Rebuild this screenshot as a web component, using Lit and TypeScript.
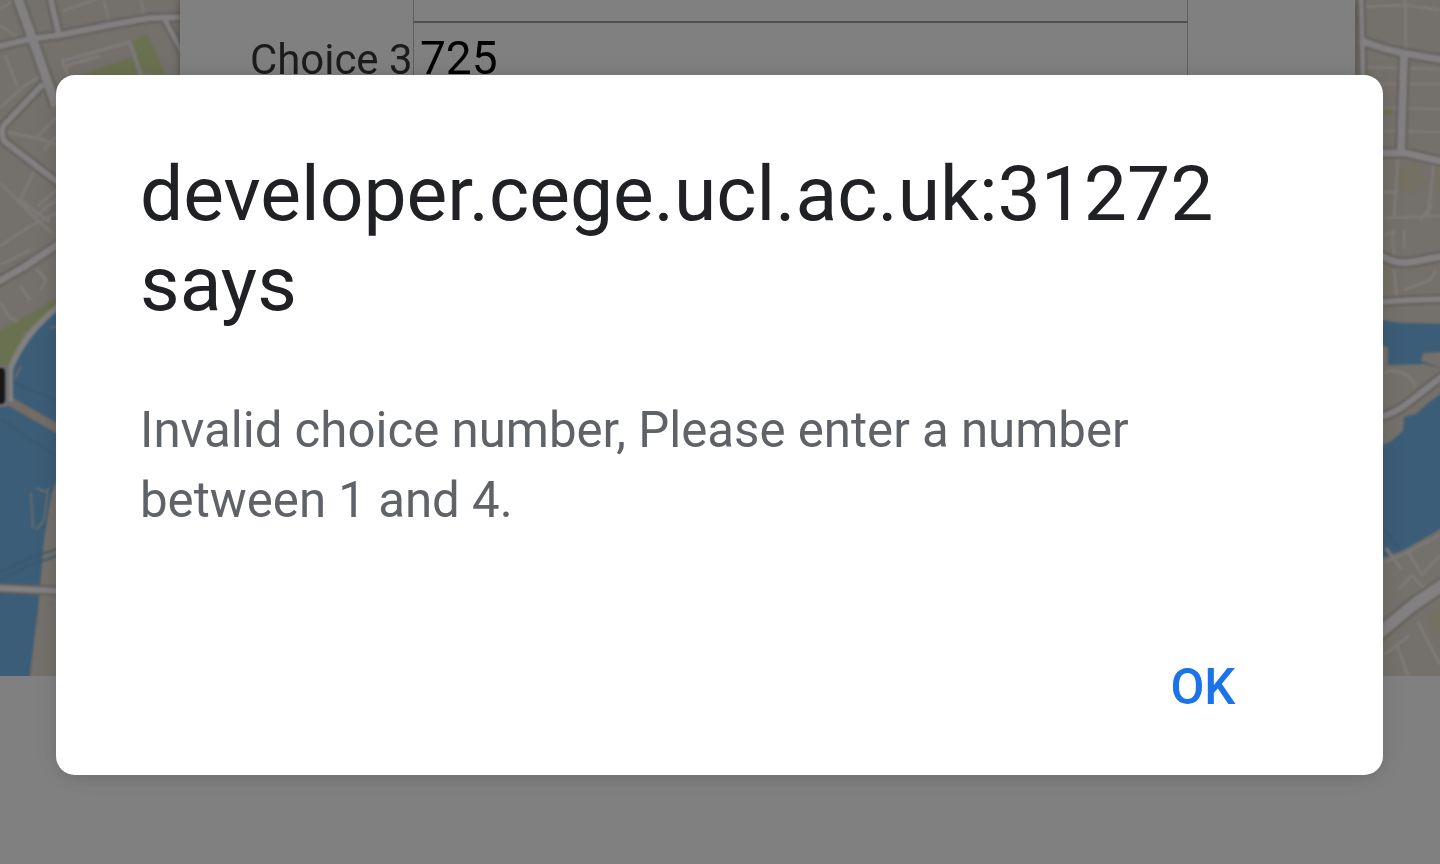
import { LitElement, html, css, svg } from "lit";
import { customElement } from "lit/decorators.js";

type Road = [path: string, width: number];

const MAJOR: Road[] = [
  ["M17 -4L33 40L56 106", 9.5],
  ["M-4 47L30 39L60 35L110 25L150 18L190 17", 6],
  ["M50 -4L59 35", 6],
  ["M43 84L4 125Q0 131 4 141L60 184", 6],
  ["M165 20L182 52", 5],
  ["M-4 283L24 267L60 243", 7],
  ["M1361 -4L1363 80", 5],
  ["M1360 40Q1382 49 1403 53T1444 60", 7],
  ["M1404 56L1401 150", 8],
  ["M1380 153L1405 153L1444 162", 7],
  ["M1380 255Q1396 265 1412 262T1444 256", 7],
  ["M1380 302L1412 300L1444 299", 6],
  ["M1380 417Q1394 414 1408 403T1444 375", 6.5],
  ["M1376 636L1412 606L1444 584", 12],
];

const MINOR: Road[] = [
  ["M-2 10L18 -2M0 25L18 38M33 30L22 0", 2.5],
  ["M62 11L100 -2M104 0L109 22M141 0L144 18", 2.5],
  ["M62 61L130 42L142 78M66 66L100 56M62 61L68 75", 3.5],
  ["M5 55L17 86M0 108L24 86L40 76M7 132L36 138L56 144M36 138L56 118M44 150L56 136", 3],
  ["M34 172L20 200L50 222M0 183L34 217L52 233M34 217L56 200M0 246L30 226L56 213M56 190L38 206", 3],
  ["M0 302L10 318L18 322M20 285L30 300M36 268L46 280L40 290M0 265L30 250", 3],
  ["M1405 -2L1406 54M1360 7L1405 5L1440 10", 3],
  ["M1364 67L1440 69M1364 84L1440 84M1384 108L1440 109M1384 131L1440 132", 2.5],
  ["M1398 158L1394 218M1434 160L1428 218M1384 192L1398 192M1384 235L1396 232M1420 220L1432 205", 3],
  ["M1392 230L1394 255M1404 230L1404 248M1384 218L1440 216M1394 270L1397 297M1404 290L1430 280L1436 270", 3],
  ["M1384 372Q1410 368 1415 388", 3],
  ["M1384 563L1408 552L1440 535M1408 552L1422 575L1440 555M1398 590L1412 575L1428 593", 3],
  ["M1397 645L1408 676M1418 622L1440 665M1384 655L1410 635M1386 548L1402 570", 3],
];

@customElement("map-view")
class MapView extends LitElement {
  static styles = css`
    :host { display: block; }
    svg { display: block; width: 100%; height: 100%; }
    .land { fill: #74706b; }
    .park { fill: #6a7150; }
    .water { fill: #3c5d77; }
    .edge { stroke: #62605d; fill: none; }
    .road { stroke: #828081; fill: none; stroke-linejoin: round; }
    .lane { stroke: #7d7a79; fill: none; stroke-linejoin: round; }
    .pier { stroke: #746c65; fill: none; }
    .inlet { stroke: #686c6c; fill: none; stroke-width: 2; }
    .route { stroke: #38566d; fill: none; stroke-width: 1.5; }
    .label { fill: #171717; }
    .halo { fill: #6f6e6e; }
    .tint { fill: #76725c; opacity: 0.6; }
    .soft { filter: blur(1.1px); }
  `;

  render() {
    return html`
      <svg viewBox="0 0 1440 676" preserveAspectRatio="none">
        <rect class="land" width="1440" height="676" />
        <g class="soft">
          <path class="park" d="M78 77L132 57L139 78ZM132 42L147 34L166 76L142 72ZM-2 332L60 296V304L24 333L8 366H-2ZM1365 68L1372 75L1366 80ZM1384 106L1394 106L1392 114H1384Z" />
          <path class="tint" d="M1401 165L1420 162L1424 185L1412 195L1398 186ZM1436 165H1442V190H1436ZM1428 615L1442 608V640L1434 632ZM1384 266H1391L1392 292H1384Z" />
          <path class="water" d="M60 303L30 336L13 368L10 402L-4 398V690H28L38 608L44 540L51 496L60 470Z" />
          <path class="water" d="M1380 320L1401 323L1442 324V352L1423 353L1421 361L1442 368L1424 364L1388 365L1388 348L1380 344Z" />
          <path class="water" d="M1442 393L1428 403L1416 414L1404 417L1403 431L1390 442L1380 446V559L1404 550L1442 528Z" />
          <path class="route" d="M12 382L60 402M0 418L28 438L60 458M0 572L30 558L60 548M0 580L30 565L60 555M1385 530L1400 550" />
          <path class="pier" stroke-width="9" d="M9 401L60 430" />
          <path class="inlet" d="M31 493L33 528M36 488L46 492M48 488L44 520L36 530M21 366L15 378M50 328L56 326M49 603L53 605" />
          <path class="road" stroke-width="6" d="M60 305Q34 326 22 346T10 372V402" />
          ${MINOR.map(([d, w]) => svg`<path class="lane" d=${d} stroke-width=${w} />`)}
          ${MAJOR.map(([d, w]) => svg`<path class="edge" d=${d} stroke-width=${w + 4} />`)}
          ${MAJOR.map(([d, w]) => svg`<path class="road" d=${d} stroke-width=${w} />`)}
          <path class="edge" stroke-width="10" d="M-4 588L60 591" />
          <path class="road" stroke-width="6" d="M-4 588L60 591" />
          <rect class="halo" x="-6" y="365" width="15" height="42" rx="5" />
          <rect class="label" x="-6" y="368" width="11" height="36" rx="4" />
        </g>
      </svg>
    `;
  }
}

@customElement("alert-dialog")
class AlertDialog extends LitElement {
  static styles = css`
    :host {
      display: flex;
      flex-direction: column;
      box-sizing: border-box;
      background: #fff;
      border-radius: 19px;
      padding: 74px 84px 0;
      box-shadow: 0 4px 14px rgba(0, 0, 0, 0.08), 0 0 24px rgba(0, 0, 0, 0.08);
    }
    .title {
      margin: 0;
      font-weight: 400;
      font-size: 76.8px;
      line-height: 90px;
      color: #202124;
    }
    .message {
      margin: 66px 0 0;
      font-size: 49.2px;
      line-height: 70px;
      color: #5f6368;
    }
    .actions { display: flex; justify-content: flex-end; padding: 118px 64px 0 0; }
    .ok {
      border: 0;
      padding: 0;
      background: none;
      font: 500 49.2px/68px Roboto, sans-serif;
      color: #1a73e8;
    }
  `;

  render() {
    return html`
      <h1 class="title">developer.cege.ucl.ac.uk:31272<br />says</h1>
      <p class="message">Invalid choice number, Please enter a number<br />between 1 and 4.</p>
      <div class="actions"><button class="ok">OK</button></div>
    `;
  }
}

@customElement("app-root")
class AppRoot extends LitElement {
  static styles = css`
    :host {
      display: block;
      position: relative;
      height: 864px;
      overflow: hidden;
      background: #808080;
      font-family: Roboto, sans-serif;
    }
    .map { height: 676px; }
    .popup {
      position: absolute;
      top: 0;
      left: 180px;
      width: 1175px;
      height: 400px;
      box-sizing: border-box;
      padding-left: 70px;
      background: #808080;
      box-shadow: 0 0 8px rgba(0, 0, 0, 0.35);
      display: grid;
      grid-template-columns: 163px 775px;
      grid-template-rows: 21px 1fr;
    }
    .label { grid-row: 2; font-size: 41.9px; line-height: 78px; color: #1c1c1c; white-space: nowrap; }
    .above, .field { grid-column: 2; box-sizing: border-box; border: solid #606060; border-width: 0 1px; }
    .field {
      border-top: 2px solid #505050;
      padding-left: 6px;
      font-size: 46px;
      line-height: 71px;
      color: #000;
    }
    .dialog { position: absolute; top: 75px; left: 56px; width: 1327.4px; height: 700px; }
  `;

  render() {
    return html`
      <map-view class="map"></map-view>
      <div class="popup">
        <div class="above"></div>
        <div class="label">Choice 3</div>
        <div class="field">725</div>
      </div>
      <alert-dialog class="dialog" role="alertdialog"></alert-dialog>
    `;
  }
}
